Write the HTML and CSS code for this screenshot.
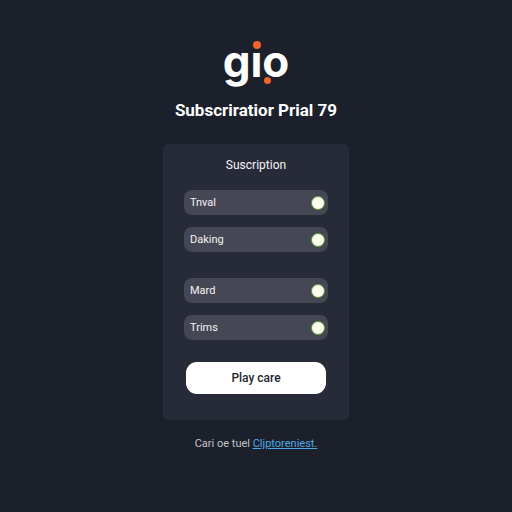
FILE: index.html
```html
<!DOCTYPE html>
<html lang="en">
<head>
<meta charset="utf-8">
<meta name="viewport" content="width=device-width, initial-scale=1">
<title>gio</title>
<link rel="stylesheet" href="styles.css">
</head>
<body>
<main class="page">
  <div class="logo">gıo<span class="dot dot-top"></span><span class="dot dot-bottom"></span></div>
  <h1 class="title">Subscriratior Prial 79</h1>
  <form class="card">
    <h2 class="card-title">Suscription</h2>
    <div class="groups">
      <div class="group">
        <label class="row">Tnval<input type="checkbox" checked></label>
        <label class="row">Daking<input type="checkbox" checked></label>
      </div>
      <div class="group">
        <label class="row">Mard<input type="checkbox" checked></label>
        <label class="row">Trims<input type="checkbox" checked></label>
      </div>
    </div>
    <button class="submit" type="button">Play care</button>
  </form>
  <p class="footer">Cari oe tuel <a href="#">Cljptoreniest.</a></p>
</main>
</body>
</html>
```
FILE: styles.css
```css
* {
  box-sizing: border-box;
}

body {
  margin: 0;
  min-height: 100vh;
  background: #1c202b;
  color: #f4f4f6;
  font-family: Roboto, "Liberation Sans", sans-serif;
}

.page {
  display: flex;
  flex-direction: column;
  align-items: center;
  padding: 33px 16px;
}

.logo {
  position: relative;
  height: 56px;
  font: 700 44px/56px Inter, sans-serif;
  color: #fff;
}

.dot {
  position: absolute;
  border-radius: 50%;
  background: #f2622b;
}

.dot-top {
  left: 30px;
  top: 8px;
  width: 8px;
  height: 8px;
}

.dot-bottom {
  left: 39px;
  top: 42px;
  width: 11px;
  height: 11px;
  border: 2px solid #1c202b;
}

.title {
  margin: 11px 0 0;
  color: #fff;
  font-size: 17px;
  font-weight: 700;
  line-height: 20px;
}

.card {
  width: 100%;
  max-width: 186px;
  margin-top: 24px;
  padding: 12px 21px 26px;
  border-radius: 6px;
  background: #272b38;
}

.card-title {
  margin: 0 0 16px;
  font-size: 12px;
  font-weight: 400;
  line-height: 18px;
  text-align: center;
}

.groups {
  display: grid;
  gap: 26px;
}

.group {
  display: grid;
  gap: 12px;
}

.row {
  display: flex;
  align-items: center;
  justify-content: space-between;
  height: 25px;
  padding: 0 3px 0 6px;
  border-radius: 8px;
  background: #464754;
  font-size: 11px;
}

.row input {
  appearance: none;
  width: 14px;
  height: 14px;
  margin: 0;
  border: 1px solid #5f973b;
  border-radius: 50%;
  background: #fbffee;
}

.submit {
  display: block;
  width: calc(100% - 4px);
  height: 32px;
  margin: 22px auto 0;
  border: 0;
  border-radius: 11px;
  background: #fff;
  color: #242630;
  font: 500 12px/16px Roboto, sans-serif;
}

.footer {
  margin: 16px 0 0;
  color: #c3c4c9;
  font-size: 11px;
  line-height: 16px;
}

.footer a {
  color: #4da9e8;
}
```
